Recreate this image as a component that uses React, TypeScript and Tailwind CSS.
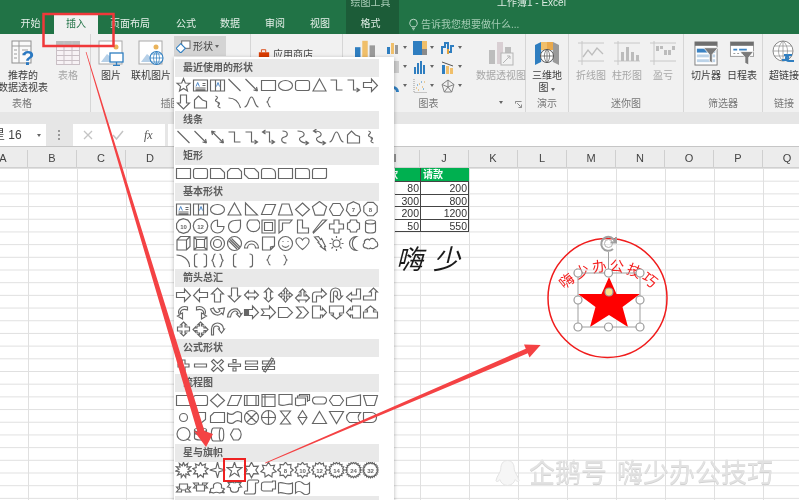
import React from "react";

const gon = (n: number, r: number, cy = 8, rot = -Math.PI / 2) => {
  let d = "";
  for (let i = 0; i < n; i++) {
    const a = rot + (i * 2 * Math.PI) / n;
    d += (i ? "L" : "M") + (8 + r * Math.cos(a)).toFixed(1) + " " + (cy + r * Math.sin(a)).toFixed(1);
  }
  return d + "Z";
};
const star = (n: number, ro: number, ri: number) => {
  let d = "";
  for (let i = 0; i < n * 2; i++) {
    const a = -Math.PI / 2 + (i * Math.PI) / n;
    const r = i % 2 ? ri : ro;
    d += (i ? "L" : "M") + (8 + r * Math.cos(a)).toFixed(1) + " " + (8 + r * Math.sin(a)).toFixed(1);
  }
  return d + "Z";
};
const circ = (r: number, cx = 8, cy = 8) => `M${cx - r} ${cy}a${r} ${r} 0 1 0 ${2 * r} 0a${r} ${r} 0 1 0-${2 * r} 0`;

const s = {
  star: "M8 1.5L9.8 6l4.7.3-3.6 3.1L12 14l-4-2.5L4 14l1.1-4.6L1.5 6.3 6.2 6Z",
  tb: "M1 3h14v11H1zM3 11h10M3 12.8h10M10 6.5h3M10 8.5h3|M3.5 9.5l1.7-4 1.7 4",
  vtb: "M1 3h14v11H1zM6 3v11M11 3v11|M7 9.5l1.5-4 1.5 4",
  line: "M2 2l12 12",
  arrow: "M2 2l12 12M14 14l-4-1M14 14l-1-4",
  dbl: "M2 2l12 12M14 14l-4-1M14 14l-1-4M2 2l4 1M2 2l1 4",
  rect: "M1 3.5h14v10H1z",
  ell: "M1 8.5a7 5 0 1 0 14 0a7 5 0 1 0-14 0",
  rr: "M3 3.5h10a2 2 0 0 1 2 2v6a2 2 0 0 1-2 2H3a2 2 0 0 1-2-2v-6a2 2 0 0 1 2-2z",
  tri: "M8 2l6.5 12h-13Z",
  elbow: "M2 3h6v10h6",
  elbowA: "M2 3h6v10h6M11 11l3 2-3 2",
  elbowD: "M3 3h6v10h5M11 11l3 2-3 2M5 1L2 3l3 2",
  curvy: "M5 2c6 0 6 5 2 6s-4 6 2 6",
  curvyA: "M3 2c8 0 8 5 4 6s-2 6 6 6M11 12l3 2-3 2",
  curvyD: "M3 2c8 0 8 5 4 6s-2 6 6 6M11 12l3 2-3 2M5 0L2 2l3 2",
  rarr: "M1 5.5h8V2l6 6.5-6 6v-4H1z",
  larr: "M15 5.5H7V2L1 8.5l6 6v-4h8z",
  uarr: "M5 15V7H2l6-6 6 6h-3v8z",
  darr: "M5 1h6v8h3l-6 6-6-6h3z",
  lrarr: "M1 8l4-4v2h6V4l4 4-4 4v-2H5v2z",
  udarr: "M8 1l4 4h-2v6h2l-4 4-4-4h2V5H4z",
  quad: "M8 1l2.5 3H9v3h3V5.5L15 8l-3 2.5V9H9v3h1.5L8 15l-2.5-3H7V9H4v1.5L1 8l3-2.5V7h3V4H5.5z",
  lru: "M8 2l3 3H9.5v4h2V7.5L15 11l-3.5 3.5V13h-7v1.5L1 11l3.5-3.5V9h2V5H5z",
  bent: "M1 15V8a3 3 0 0 1 3-3h6V2l5 5-5 4V9H5v6z",
  uturn: "M2 15V6a5 5 0 0 1 10 0v3h2l-3.5 4L7 9h2V6a2 2 0 0 0-4 0v9z",
  lup: "M15 2v10H6v2.5L1 10l5-4.5V8h5V2z",
  bup: "M1 13V9h8V5H7l4-4 4 4h-2v8z",
  cl: "M12 3C6 1 1 6 4 11l-2 1 5 3V9l-2 1C4 7 7 4 12 6z",
  cr: "M4 3c6-2 11 3 8 8l2 1-5 3V9l2 1c1-3-2-6-7-4z",
  cu: "M1 5c2 6 8 8 11 4l1.5 1.5L15 4l-6 1 1.5 2C8 10 5 8 4 4z",
  cd: "M1 13c1-9 11-11 13-3l1.5-.5L13 13l-3-3 1.5-.5C10 5 5 7 4 13z",
  sr: "M1 5.5h1v6H1zM3 5.5h1v6H3zM5 5.5h4V2l6 6.5-6 6v-3H5z",
  notch: "M1 5h8V2l6 6.5-6 6v-3H1l2.5-3z",
  pentR: "M1 3.5h9l5 5-5 5H1z",
  chev: "M2 3h7l5 5.5-5 5.5H2l5-5.5z",
  cRight: "M1 2h8v4h2V4l4 4.5-4 4.5v-2H9v3H1z",
  cDown: "M1 2h14v7h-4v2h2l-5 4-5-4h2V9H1z",
  cLeft: "M15 2H7v4H5V4L1 8.5 5 13v-2h2v3h8z",
  cUp: "M1 14h14V8h-4V6h2L8 2 3 6h2v2H1z",
  cUD: "M8 1l3 3H9.5v2H14v4H9.5v2H11l-3 3-3-3h1.5v-2H2V6h4.5V4H5z",
  cQuad: "M8 1l2.5 2.5H9V5h2.5v2H13V6l2.5 2.500L13 11V9.500h-1.500V12H9v1.500h1.500L8 16l-2.500-2.500H7V12H4.500V9.500H3V11L.5 8.500 3 6v1h1.500V5H7V3.500H5.500z",
  circA: "M2 14V8a6 6 0 0 1 12 0l1 0-3 4-3-4h1a3 3 0 0 0-6 0v6z",
  free: "M2 14V6l4-4 4 4 4 1.500V14z",
  scrib: "M6 2c6 2-4 4 2 6s-4 4 3 6M8 9c3 0 1 3 0 3",
  curve: "M2 4c6 0 10 3 12 10",
  wave: "M1 13c4 0 4-10 7-10s3 10 7 10",
  lbrace: "M10 3c-3 0-1 5-4 5 3 0 1 5 4 5",
  rbrace: "M6 3c3 0 1 5 4 5-3 0-1 5-4 5",
  r3: "M1 3.500h10l4 4v6H1z",
  r4: "M4 3.500h8l3 3v7H1v-7z",
  r5: "M1 3.500h10l4 4v6H5l-4-4z",
  r6: "M3 3.500h7a5 5 0 0 1 5 5v5H1v-8a2 2 0 0 1 2-2z",
  r8: "M1 3.500h11a3 3 0 0 1 3 3v7H1z",
  r9: "M3 3.500h12v8a2 2 0 0 1-2 2H1v-8a2 2 0 0 1 2-2z",
  rtri: "M2 2l12 12H2z",
  para: "M5 3.500h10l-4 10H1z",
  trap: "M4.500 3h7L15 14H1z",
  dia: "M8 2l7 6.500-7 6.500-7-6.500z",
  pent: gon(5, 7.5),
  hex: "M4.500 2.500h7L15 8.500l-3.500 6h-7L1 8.500z",
  hept: gon(7, 7.3) + "||7",
  oct: gon(8, 7.3, 8, -Math.PI / 8) + "||8",
  dec: gon(10, 7.3) + "||10",
  dod: gon(12, 7.3) + "||12",
  pie: "M8 2a6.500 6.500 0 1 0 6.500 6.500H8z",
  tear: "M14 2v6.500a6 6 0 1 1-6-6z",
  chord: "M14 2a6.500 6.500 0 1 1-8 0z",
  frame: "M1.500 2h13v13h-13zM4 4.500h8v8H4z",
  half: "M1.500 2h13l-2.500 3H5v7l-3.500 3z",
  ell2: "M3 2h5v8h6v5H3z",
  diag: "M1.500 14L11 2h4L2 15z",
  plus: "M5.500 2h5v4h4.500v5H10.500v4h-5v-4H1V6h4.500z",
  plaque: "M5 2h6a3 3 0 0 0 3 3v6a3 3 0 0 0-3 3H5a3 3 0 0 0-3-3V5a3 3 0 0 0 3-3z",
  can: "M3 4a5 2 0 0 1 10 0v9a5 2 0 0 1-10 0zM3 4a5 2 0 0 0 10 0",
  cube: "M1.500 5L5 1.500h9.500v10L11 15H1.500zM1.500 5H11v10M11 5l3.500-3.500",
  bevel: "M1.500 2h13v13h-13zM4 4.500h8v8H4zM1.500 2L4 4.500M14.500 2L12 4.500M1.500 15L4 12.500M14.500 15L12 12.500",
  donut: circ(7, 8, 8.5) + circ(4, 8, 8.5),
  nosym: circ(7, 8, 8.5) + "M3.500 4.500l9 9M5 3.500l8.500 8.500M2.500 6l8 8",
  arc: "M1 13a7 7 0 0 1 14 0h-3a4 4 0 0 0-8 0z",
  fold: "M2 2h12v9l-4 4H2zM14 11l-4 1v3",
  smile: circ(7, 8, 8.5) + "M5 6.500h1M10 6.500h1M4.500 10.500c2 2.500 5 2.500 7 0",
  heart: "M8 14.500C2 10 1 7 1.500 5 2.500 2 6.500 2 8 5c1.500-3 5.500-3 6.500 0 .5 2-.5 5-6.500 9.500z",
  bolt: "M3 2l4-.5 2 3 1-1 4 8-1 0 1 3.500-5-3.500 1-.5-3.500-3.500 1-.5z",
  sun: circ(3.5, 8, 8.5) + "M8 1v2M8 14v2M1 8.500h2M13 8.500h2M3 3.500l1.500 1.500M11.500 12l1.500 1.500M3 13.500L4.500 12M11.500 5L13 3.500",
  moon: "M11 1.500a7 7 0 1 0 0 14 8 8 0 0 1 0-14z",
  cloud: "M4 13c-4 0-4-4-2-5-1-3 3-5 5-3 2-3 6-1 6 1 3 1 3 6 0 6-1 2-4 2-5 1-1 1-3 1-4 0z",
  arcL: "M1 3c6 0 13 4 13 12",
  brk: "M5 2C3 2 2 3 2 4v9c0 1 1 2 3 2M11 2c2 0 3 1 3 2v9c0 1-1 2-3 2",
  brc: "M6 2c-3 0-1 6-4 6.500C5 9 3 15 6 15M10 2c3 0 1 6 4 6.500-3 .5-1 6.500-4 6.500",
  lb: "M10 2c-3 0-3 1-3 2v9c0 1 0 2 3 2",
  rb: "M6 2c3 0 3 1 3 2v9c0 1 0 2-3 2",
  add: "M6.500 3h3v4h4v3h-4v4h-3v-4h-4V7h4z",
  sub: "M2 7h12v3H2z",
  mul: "M4 2.500l4 4 4-4 2 2-4 4 4 4-2 2-4-4-4 4-2-2 4-4-4-4z",
  div: "M2 7h12v2.500H2zM6.500 2.500h3v3h-3zM6.500 11h3v3h-3z",
  eq: "M2 4h12v3H2zM2 9.500h12v3H2z",
  neq: "M2 4h12v3H2zM2 9.500h12v3H2zM11 1l2 1-8 13-2-1z",
  fPre: "M1 3.500h14v10H1zM3.500 3.500v10M12.500 3.500v10",
  fInt: "M1.500 2.500h13v12h-13zM1.500 5h13M4.500 2.500v12",
  fDoc: "M1.500 2.500h13v10c-4-2-8 3-13 0z",
  fMul: "M1 6h10v7c-3-1-6 2-10 0zM3 6V4h10v6M5 4V2.500h10v6h-2",
  fTerm: "M4.500 5h7a3.500 3.500 0 0 1 0 7h-7a3.500 3.500 0 0 1 0-7z",
  fPrep: "M4.500 3.500h7L15 8.500l-3.500 5h-7L1 8.500z",
  fMan: "M1 6L15 3v10.500H1z",
  fOp: "M1 3.500h14l-3 10H4z",
  fCon: circ(4, 8, 8.5),
  fOff: "M3 3.500h10v7l-5 4-5-4z",
  fCard: "M4.500 3.500H15v10H1V7z",
  fTape: "M1 4c3 2 5 2 7 0s4-2 7 0v9c-3-2-5-2-7 0s-4 2-7 0z",
  fSum: circ(7, 8, 8.5) + "M3 3.500l10 10M13 3.500l-10 10",
  fOr: circ(7, 8, 8.5) + "M8 1.500v14M1 8.500h14",
  fCol: "M3 2h10L3 15h10z",
  fSort: "M8 1.500l4.500 7-4.500 7-4.500-7zM3.500 8.500h9",
  fExt: "M8 2.500l7 12H1z",
  fMer: "M1 2.500h14l-7 12z",
  fSto: "M4 3.500h11c-3 3-3 7 0 10H4c-4-3-4-7 0-10z",
  fDel: "M1 3.500h8a5 5 0 0 1 0 10H1z",
  fMag: circ(6.5, 8, 8) + "M11 13l4 1.500",
  fDsk: "M2 4a6 2 0 0 1 12 0v8a6 2 0 0 1-12 0zM2 4a6 2 0 0 0 12 0M2 6.500a6 2 0 0 0 12 0",
  fDrum: "M4 2h8c3 0 3 13 0 13H4c-3 0-3-13 0-13zM12 2c-3 0-3 13 0 13",
  fDis: "M4 8.500L7 3h5a7 7 0 0 1 0 11H7z",
  b1: star(11, 7.8, 4.5),
  b2: star(9, 7.8, 4.8),
  s4: star(4, 7.8, 2.2),
  s5: star(5, 7.8, 3.1),
  s6: star(6, 7.8, 4.3),
  s7: star(7, 7.8, 4.8),
  s8: star(8, 7.8, 5.5) + "||8",
  s10: star(10, 7.8, 5.8) + "||10",
  s12: star(12, 7.8, 6) + "||12",
  s16: star(16, 7.8, 6.2) + "||14",
  s24: star(20, 7.8, 6.4) + "||24",
  s32: star(24, 7.8, 6.5) + "||32",
  rib1: "M1 8h3V5h8v3h3l-2 2.500 2 2.500H10v-2H6v2H1l2-2.500zM4 5v5h2M12 5v5h-2",
  rib2: "M1 4h5v2h4V4h5l-2 2.500L15 9h-3v3H4V9H1l2-2.500zM4 9V6h2M12 9V6h-2",
  rib3: "M1 10c1-1 2-1 3-1V6c1-3 7-3 8 0v3c1 0 2 0 3 1l-2 2 2 2c-2-1-3-1-5 0-2-1-4-1-6 0-2-1-3-1-5 0l2-2z",
  rib4: "M1 3c2 1 3 1 5 0 1 1 3 1 4 0 2 1 3 1 5 0l-2 2.500L15 8c-1 0-2 0-3 1v2c-1 3-7 3-8 0V9C3 8 2 8 1 8l2-2.500z",
  scr: "M4 3c0-2 2-2 2-2h8c2 0 1 3 0 3h-2v9c0 2-2 2-2 2H2c-2 0-1-3 0-3h2z",
  scrH: "M1 5c0-1 1-2 3-2h8V2h3v8h-3v2H3c-3 0-2-3-2-3z",
  wv: "M1 4c4-2 9 3 14 0v10c-5 3-10-2-14 0z",
  dwv: "M1 4c2-2 5-2 7 0s5 2 7 0v10c-2 2-5 2-7 0s-5-2-7 0z",
};

const rows: { title: string; rows: string[][]; pb?: string }[] = [
  { title: "最近使用的形状", rows: [[s.star, s.tb, s.vtb, s.line, s.arrow, s.rect, s.ell, s.rr, s.tri, s.elbow, s.elbowA, s.rarr], [s.darr, s.free, s.scrib, s.curve, s.wave, s.lbrace]] },
  { title: "线条", pb: "pb-px", rows: [[s.line, s.arrow, s.dbl, s.elbow, s.elbowA, s.elbowD, s.curvy, s.curvyA, s.curvyD, s.wave, s.free, s.scrib]] },
  { title: "矩形", pb: "pb-px", rows: [[s.rect, s.rr, s.r3, s.r4, s.r5, s.r6, s.rect, s.r8, s.r9]] },
  { title: "基本形状", rows: [
    [s.tb, s.vtb, s.ell, s.tri, s.rtri, s.para, s.trap, s.dia, s.pent, s.hex, s.hept, s.oct],
    [s.dec, s.dod, s.pie, s.tear, s.chord, s.frame, s.half, s.ell2, s.diag, s.plus, s.plaque, s.can],
    [s.cube, s.bevel, s.donut, s.nosym, s.arc, s.fold, s.smile, s.heart, s.bolt, s.sun, s.moon, s.cloud],
    [s.arcL, s.brk, s.brc, s.lb, s.rb, s.lbrace, s.rbrace],
  ] },
  { title: "箭头总汇", pb: "pb-px", rows: [
    [s.rarr, s.larr, s.uarr, s.darr, s.lrarr, s.udarr, s.quad, s.lru, s.bent, s.uturn, s.lup, s.bup],
    [s.cl, s.cr, s.cu, s.cd, s.sr, s.notch, s.pentR, s.chev, s.cRight, s.cDown, s.cLeft, s.cUp],
    [s.cUD, s.cQuad, s.circA],
  ] },
  { title: "公式形状", rows: [[s.add, s.sub, s.mul, s.div, s.eq, s.neq]] },
  { title: "流程图", pb: "pb-px", rows: [
    [s.rect, s.rr, s.dia, s.para, s.fPre, s.fInt, s.fDoc, s.fMul, s.fTerm, s.fPrep, s.fMan, s.fOp],
    [s.fCon, s.fOff, s.fCard, s.fTape, s.fSum, s.fOr, s.fCol, s.fSort, s.fExt, s.fMer, s.fSto, s.fDel],
    [s.fMag, s.fDsk, s.fDrum, s.fDis],
  ] },
  { title: "星与旗帜", rows: [
    [s.b1, s.b2, s.s4, s.s5, s.s6, s.s7, s.s8, s.s10, s.s12, s.s16, s.s24, s.s32],
    [s.rib1, s.rib2, s.rib3, s.rib4, s.scr, s.scrH, s.wv, s.dwv],
  ] },
];

function Shape({ spec }: { spec: string }) {
  const [d, blue, label] = spec.split("|");
  return (
    <svg viewBox="0 0 16 17" className="w-[17px] h-[17px] shrink-0" fill="none" stroke="#666666" strokeWidth="1.15">
      <path d={d} />
      {blue ? <path d={blue} stroke="#3f7fc4" strokeWidth="0.9" /> : null}
      {label ? (
        <text x="8" y="10.5" textAnchor="middle" fontSize="6" fill="#666" stroke="none" fontWeight="700">
          {label}
        </text>
      ) : null}
    </svg>
  );
}

function Menu() {
  return (
    <div className="absolute left-[174px] top-[57px] w-[220px] h-[445px] bg-white pl-px pt-[2px] shadow-[0_1px_4px_rgba(0,0,0,0.3)] overflow-hidden">
      {rows.map((sec) => (
        <div key={sec.title} className={sec.pb}>
          <div className="w-[204px] h-[18px] bg-[#e9e9e9] pl-2 text-[10px] leading-[18px] font-semibold text-[#5c5c5c]">{sec.title}</div>
          {sec.rows.map((r, i) => (
            <div key={i} className="flex h-[17px]">
              {r.map((spec, j) => (
                <Shape key={j} spec={spec} />
              ))}
            </div>
          ))}
        </div>
      ))}
      <div className="w-[204px] h-[18px] bg-[#e9e9e9]" />
    </div>
  );
}

function Tab({ w, children, active }: { w: string; children: React.ReactNode; active?: boolean }) {
  return (
    <div className={`${w} h-[20px] text-center text-[10px] leading-[19px] ${active ? "bg-[#f1f1f1] text-[#217346]" : "text-[#e6f0ea]"}`}>{children}</div>
  );
}

function Header() {
  return (
    <div className="flex h-[34px] bg-[#217346] overflow-hidden">
      <div className="flex items-end pl-[7px]">
        <Tab w="w-[47px]">开始</Tab>
        <Tab w="w-[44px]" active>插入</Tab>
        <Tab w="w-[64px]">页面布局</Tab>
        <Tab w="w-[48px]">公式</Tab>
        <Tab w="w-[40px]">数据</Tab>
        <Tab w="w-[50px]">审阅</Tab>
        <Tab w="w-[40px]">视图</Tab>
      </div>
      <div className="ml-[6px] w-[53px] bg-[#1c5c38] flex flex-col items-center text-[10px] text-[#dcebe2] pr-[4px]">
        <div className="h-[14px] -mt-[4px] leading-[14px] text-[#a9cdb8]">绘图工具</div>
        <div className="h-[20px] mt-[4px] leading-[19px]">格式</div>
      </div>
      <div className="flex-1 flex flex-col">
        <div className="h-[14px] pl-[98px] -mt-[4px] leading-[14px] text-[10px] text-[#dcebe2] whitespace-pre">工作簿1 - Excel</div>
        <div className="h-[20px] mt-[4px] flex items-center pl-[10px] gap-[3px] text-[10px] text-[#a3ccb4]">
          <svg viewBox="0 0 12 16" className="w-[9px] h-[13px]" fill="none" stroke="#cfe3d7" strokeWidth="1.2">
            <path d="M3.5 11C1.5 9 1 7.5 1 6a5 5 0 0 1 10 0c0 1.5-.5 3-2.500 5zM4 13h4M5 15h2" />
          </svg>
          <span>告诉我您想要做什么...</span>
        </div>
      </div>
    </div>
  );
}

function Sep({ w, label, pr, children, launcher }: { w: string; label: string; pr?: string; children: React.ReactNode; launcher?: boolean }) {
  return (
    <div className={`${w} shrink-0 h-[78px] flex flex-col`}>
      <div className="h-[64px] pt-[3px] border-r border-[#d6d6d6] flex">{children}</div>
      <div className={`relative h-[14px] border-r border-[#d6d6d6] text-center text-[10px] leading-[12px] text-[#777] ${pr ?? ""}`}>
        {label}
        {launcher ? (
          <svg viewBox="0 0 8 8" className="absolute right-[3px] top-[3px] w-[7px] h-[7px]" fill="none" stroke="#777" strokeWidth="1">
            <path d="M.5 3V.5H7.500M7.500 4v3.500H4M2.500 2.500l4 4" />
          </svg>
        ) : null}
      </div>
    </div>
  );
}

function Big({ w, icon, label, grey, extra }: { w: string; icon: React.ReactNode; label: React.ReactNode; grey?: boolean; extra?: React.ReactNode }) {
  return (
    <div className={`${w} shrink-0 flex flex-col items-center`}>
      <div className="h-[28px] mt-[2px] flex items-center justify-center">{icon}</div>
      <div className={`mt-[3px] text-center text-[10px] leading-[12px] whitespace-nowrap ${grey ? "text-[#a6a6a6]" : "text-[#3c3c3c]"}`}>{label}</div>
      {extra}
    </div>
  );
}

const PivotIcon = (
  <svg viewBox="0 0 24 28" className="w-[24px] h-[28px]">
    <rect x="1" y="2" width="19" height="22" fill="#fafafa" stroke="#8f8f8f" />
    <path d="M1 7h19M8 2v22M3 11h3M3 15h3M3 19h3M11 11h6M11 15h3" stroke="#9a9a9a" fill="none" />
    <text x="17" y="26" fontSize="21" fontWeight="700" fill="#2b79c2" textAnchor="middle">?</text>
  </svg>
);
const TableIcon = (
  <svg viewBox="0 0 24 24" className="w-[24px] h-[24px] mb-[1px]" fill="none" stroke="#c9bfc5">
    <rect x="0.5" y="0.5" width="23" height="23" fill="#f7f2f5" />
    <rect x="0.5" y="0.5" width="23" height="4" fill="#bdbdbd" stroke="#bdbdbd" />
    <path d="M8 0v24M16 0v24M0 9.500h24M0 14.500h24M0 19.500h24" />
  </svg>
);
const PicIcon = (
  <svg viewBox="0 0 26 26" className="w-[26px] h-[26px]">
    <rect x="1" y="1" width="23" height="23" fill="#fff" stroke="#a9a9a9" />
    <path d="M3 22l6-8 5 4 4-3 4 7z" fill="#b6d0e8" />
    <circle cx="18" cy="7" r="2.5" fill="#eab35a" />
    <rect x="12" y="13" width="13" height="9" fill="#fff" stroke="#2f7ec0" strokeWidth="1.3" />
    <path d="M18.500 22v3M15 25.500h7" stroke="#2f7ec0" strokeWidth="1.3" />
  </svg>
);
const NetIcon = (
  <svg viewBox="0 0 26 26" className="w-[26px] h-[26px]">
    <rect x="1" y="1" width="23" height="23" fill="#fff" stroke="#a9a9a9" />
    <path d="M3 22l6-8 5 4 4-3 4 7z" fill="#b6d0e8" />
    <circle cx="18" cy="7" r="2.5" fill="#eab35a" />
    <circle cx="18.5" cy="18" r="6.5" fill="#fff" stroke="#2f7ec0" strokeWidth="1.1" />
    <path d="M12 18h13M18.500 11.500v13M14 14h9M14 22h9M18.500 11.500c-4 3-4 10 0 13M18.500 11.500c4 3 4 10 0 13" stroke="#2f7ec0" strokeWidth="0.7" fill="none" />
  </svg>
);
const PivotChart = (
  <svg viewBox="0 0 26 26" className="w-[26px] h-[26px]">
    <rect x="1" y="10" width="6" height="14" fill="#bdbdbd" />
    <rect x="9" y="2" width="6" height="22" fill="#d9cfd3" />
    <rect x="17" y="7" width="6" height="8" fill="#bdbdbd" />
    <rect x="13" y="13" width="12" height="12" fill="#f2f2f2" stroke="#b5b5b5" />
    <path d="M15 23l7-7M19 16h3v3" stroke="#b5b5b5" fill="none" />
  </svg>
);
const MapIcon = (
  <svg viewBox="0 0 26 26" className="w-[26px] h-[26px]">
    <path d="M1 5l6-3v20l-6 3z" fill="#2f7ec0" />
    <path d="M7 2h6v8H7z" fill="#f0bf6a" />
    <path d="M13 2h6v8h-6z" fill="#e9a94c" />
    <path d="M19 2l6 3v20l-6-3z" fill="#9a9a9a" />
    <path d="M7 10h12v12H7z" fill="#d8dde4" />
    <circle cx="13" cy="16" r="6.5" fill="#fff" stroke="#555" />
    <path d="M6.500 16h13M13 9.500v13M13 9.500c-3.500 3-3.500 10 0 13M13 9.500c3.500 3 3.500 10 0 13" stroke="#555" strokeWidth="0.7" fill="none" />
  </svg>
);
const Spark = ({ d, bars }: { d?: string; bars?: number[][] }) => (
  <svg viewBox="0 0 26 24" className="w-[26px] h-[24px]" fill="none" stroke="#c8c8c8">
    <path d="M0 2h26M4 0v24M0 20h26" />
    {d ? <path d={d} stroke="#bdbdbd" strokeWidth="1.3" /> : null}
    {bars ? bars.map((b, i) => <rect key={i} x={b[0]} y={b[1]} width="3" height={b[2]} fill="#bcbcbc" stroke="none" />) : null}
  </svg>
);
const SlicerIcon = (
  <svg viewBox="0 0 26 26" className="w-[25px] h-[25px]">
    <rect x="1" y="1" width="23" height="24" fill="#fff" stroke="#7f7f7f" />
    <rect x="1" y="1" width="23" height="4" fill="#6f6f6f" />
    <rect x="3" y="8" width="19" height="4" fill="#3b83c4" />
    <rect x="3" y="14" width="19" height="3" fill="#bcd3e8" />
    <rect x="3" y="19" width="19" height="3" fill="#bcd3e8" />
    <path d="M10 7h15l-6 7v9l-3-2v-7z" fill="#7a7a7a" stroke="#fff" strokeWidth="0.8" />
  </svg>
);
const TimelineIcon = (
  <svg viewBox="0 0 26 26" className="w-[26px] h-[25px]">
    <rect x="1" y="1" width="24" height="15" fill="#fff" stroke="#9a9a9a" />
    <rect x="1" y="1" width="24" height="4" fill="#6f6f6f" />
    <path d="M4 9h4M10 9h8" stroke="#3b83c4" strokeWidth="2" />
    <path d="M4 13h2M8 13h2M12 13h2" stroke="#9a9a9a" />
    <path d="M11 11h14l-5 6v8l-4-2v-6z" fill="#7a7a7a" stroke="#fff" strokeWidth="0.8" />
  </svg>
);
const LinkIcon = (
  <svg viewBox="0 0 26 26" className="w-[26px] h-[26px]">
    <circle cx="12" cy="11" r="10" fill="#fff" stroke="#8a8a8a" />
    <path d="M2 11h20M12 1v20M3 6h18M3 16h18M12 1c-6 5-6 15 0 20M12 1c6 5 6 15 0 20" stroke="#8a8a8a" strokeWidth="0.7" fill="none" />
    <path d="M11 20h5a3 3 0 0 0 0-5h-3M21 15h-3a3 3 0 0 0 0 6h5" stroke="#2f7ec0" strokeWidth="2" fill="none" />
  </svg>
);
const Caret = () => <span className="w-0 h-0 border-x-[2.5px] border-x-transparent border-t-[3px] border-t-[#666] inline-block" />;

function Mini({ children }: { children: React.ReactNode }) {
  return (
    <div className="w-[28px] h-[19px] flex items-center gap-[3px] shrink-0">
      <svg viewBox="0 0 14 14" className="w-[14px] h-[14px]">{children}</svg>
      <Caret />
    </div>
  );
}

function Ribbon() {
  return (
    <div className="flex h-[78px] bg-[#f1f1f1] overflow-hidden">
      <Sep w="w-[91px]" label="表格" pr="pr-[46px]">
        <Big w="w-[46px]" icon={PivotIcon} label={<>推荐的<br />数据透视表</>} />
        <Big w="w-[44px]" icon={TableIcon} label="表格" grey />
      </Sep>
      <Sep w="w-[160px]" label="插图">
        <div className="w-[40px] shrink-0"><Big w="w-[40px]" icon={PicIcon} label="图片" /></div>
        <Big w="w-[40px]" icon={NetIcon} label="联机图片" />
        <div className="ml-[3px] w-[52px] h-[20px] bg-[#d4d4d4] flex items-center gap-[2px] pl-[2px] text-[10px] text-[#444] -mt-[1px]">
          <svg viewBox="0 0 16 14" className="w-[15px] h-[13px]" fill="none" strokeWidth="1.2">
            <rect x="6" y="1" width="9" height="8" stroke="#777" fill="#fff" />
            <path d="M5 4l5 5-5 5-5-5z" stroke="#2f7ec0" fill="#fff" />
          </svg>
          形状
          <Caret />
        </div>
      </Sep>
      <Sep w="w-[92px]" label="加载项">
        <div className="ml-[7px] pt-[10px] h-[24px] flex items-center gap-[3px] text-[10px] text-[#444] whitespace-nowrap">
          <svg viewBox="0 0 14 14" className="w-[12px] h-[12px] shrink-0">
            <path d="M1 5h12v8H1z" fill="#d83b01" />
            <path d="M4 5V2h5v3" fill="none" stroke="#d83b01" />
          </svg>
          <span>应用商店</span>
        </div>
      </Sep>
      <Sep w="w-[183px]" label="图表" pr="pr-[11px]" launcher>
        <div className="ml-[11px] w-[24px] shrink-0 mt-[2px]">
          <svg viewBox="0 0 24 22" className="w-[22px] h-[20px]">
            <rect x="1" y="9" width="6" height="13" fill="#2f7ec0" />
            <rect x="9" y="2" width="6" height="20" fill="#f0bf6a" />
            <rect x="17" y="7" width="6" height="15" fill="#9a9a9a" />
          </svg>
        </div>
        <div className="ml-[8px] w-[27px] shrink-0 flex flex-col gap-0 mt-[1px]">
          <Mini>
            <rect x="1" y="6" width="3" height="7" fill="#2f7ec0" />
            <rect x="5" y="2" width="3" height="11" fill="#f0bf6a" />
            <rect x="9" y="4" width="3" height="9" fill="#9a9a9a" />
          </Mini>
          <Mini><rect x="1" y="1" width="12" height="12" fill="#ccc" /></Mini>
          <Mini><path d="M1 13a6 6 0 0 1 12 0h-3a3 3 0 0 0-6 0z" fill="#2f7ec0" /></Mini>
        </div>
        <div className="w-[28px] shrink-0 flex flex-col mt-[1px]">
          <Mini>
            <rect x="0" y="0" width="9" height="14" fill="#2f7ec0" />
            <rect x="9" y="0" width="5" height="8" fill="#f0bf6a" />
            <rect x="9" y="8" width="5" height="6" fill="#8a8a8a" />
          </Mini>
          <Mini>
            <rect x="1" y="7" width="2" height="7" fill="#2f7ec0" />
            <rect x="4" y="3" width="2" height="11" fill="#2f7ec0" />
            <rect x="7" y="1" width="2" height="13" fill="#2f7ec0" />
            <rect x="10" y="5" width="2" height="9" fill="#2f7ec0" />
          </Mini>
          <Mini>
            <path d="M1 0v13.500h13" fill="none" stroke="#999" strokeDasharray="1 1" />
            <path d="M3 9h1M6 5h1M9 8h1M11 3h1M5 11h1" stroke="#e0a33e" />
            <path d="M4 6h1M8 3h1M10 10h1" stroke="#2f7ec0" />
          </Mini>
        </div>
        <div className="w-[29px] shrink-0 flex flex-col mt-[1px]">
          <Mini>
            <path d="M1 13V6h3V2h3v9h3V5h3" fill="none" stroke="#2f7ec0" strokeWidth="2" />
            <path d="M7 13V8" stroke="#e0a33e" strokeWidth="2" />
          </Mini>
          <Mini>
            <rect x="1" y="5" width="3" height="9" fill="#2f7ec0" />
            <rect x="5" y="6" width="3" height="8" fill="#f0bf6a" />
            <rect x="9" y="8" width="3" height="6" fill="#f0bf6a" />
            <path d="M1 2l11 4" stroke="#555" />
          </Mini>
          <Mini>
            <path d="M7 1l6 4.500-2.300 7.500H3.300L1 5.500zM7 1v7M1 5.500L7 8l6-2.500M3.300 13L7 8l3.700 5" fill="none" stroke="#777" strokeWidth="0.9" />
          </Mini>
        </div>
        <div className="ml-[5px]"><Big w="w-[52px]" icon={PivotChart} label="数据透视图" grey extra={<div className="mt-[5px]"><Caret /></div>} /></div>
      </Sep>
      <Sep w="w-[43px]" label="演示">
        <Big w="w-[42px]" icon={MapIcon} label={<>三维地<br />图 <Caret /></>} />
      </Sep>
      <Sep w="w-[115px]" label="迷你图">
        <div className="w-[4px] shrink-0" />
        <Big w="w-[36px]" grey label="折线图" icon={<Spark d="M5 16l5-7 4 5 5-7 6 6" />} />
        <Big w="w-[36px]" grey label="柱形图" icon={<Spark bars={[[7, 11, 9], [12, 6, 14], [17, 11, 9], [22, 14, 6]]} />} />
        <Big w="w-[36px]" grey label="盈亏" icon={<Spark bars={[[6, 5, 5], [10, 5, 3], [14, 9, 5], [18, 9, 5], [22, 5, 4]]} />} />
      </Sep>
      <Sep w="w-[79px]" label="筛选器">
        <div className="w-[4px] shrink-0" />
        <Big w="w-[36px]" icon={SlicerIcon} label="切片器" />
        <Big w="w-[36px]" icon={TimelineIcon} label="日程表" />
      </Sep>
      <div className="w-[36px] shrink-0 h-[78px] flex flex-col">
        <div className="h-[64px] pt-[3px] flex pl-[3px]">
          <Big w="w-[36px]" icon={LinkIcon} label="超链接" />
        </div>
        <div className="text-center text-[10px] leading-[12px] text-[#777] pl-[6px]">链接</div>
      </div>
    </div>
  );
}

function FormulaBar() {
  return (
    <div className="flex h-[24px] bg-[#e6e6e6] border-b border-[#c6c6c6] pt-px">
      <div className="w-[46px] h-[22px] bg-white flex items-center justify-between pr-[5px] overflow-hidden text-[12px] text-[#444]">
        <span className="-ml-[7px] whitespace-pre">星 16</span>
        <Caret />
      </div>
      <div className="w-[27px] flex flex-col items-center justify-center gap-[2px] pr-[1px]">
        <span className="w-[2px] h-[2px] bg-[#999]" />
        <span className="w-[2px] h-[2px] bg-[#999]" />
        <span className="w-[2px] h-[2px] bg-[#999]" />
      </div>
      <div className="w-[92px] h-[22px] bg-white flex items-center">
        <svg viewBox="0 0 10 10" className="ml-[10px] w-[10px] h-[10px]" fill="none" stroke="#c4c4c4" strokeWidth="1.3"><path d="M1 1l8 8M9 1l-8 8" /></svg>
        <svg viewBox="0 0 12 10" className="ml-[19px] w-[12px] h-[10px]" fill="none" stroke="#c4c4c4" strokeWidth="1.5"><path d="M1 5l3.500 4L11 1" /></svg>
        <span className="ml-[20px] font-['Liberation_Serif',serif] italic text-[12px] text-[#555]">fx</span>
      </div>
      <div className="ml-[3px] flex-1 h-[22px] bg-white" />
    </div>
  );
}

function Columns() {
  const cols = ["A", "B", "C", "D", "", "", "", "", "I", "J", "K", "L", "M", "N", "O", "P", "Q"];
  return (
    <div className="flex h-[21px] bg-[#ececec] border-b border-[#d0d0d0] -ml-[21px] overflow-hidden">
      {cols.map((c, i) => (
        <div key={i} className="w-[49px] shrink-0 border-r border-[#cfcfcf] mt-[3px] text-center text-[11px] leading-[17px] text-[#444] font-medium">{c}</div>
      ))}
    </div>
  );
}

const tableRows = [["80", "200"], ["300", "800"], ["200", "1200"], ["50", "550"]];

function SheetTable() {
  return (
    <div className="absolute left-[395px] top-0 w-[74px] border-b border-[#444]">
      <div className="flex h-[13px] bg-[#00b050] text-white text-[10px] leading-[13px] font-bold">
        <div className="w-[25px] overflow-hidden text-left -indent-[7px]">款</div>
        <div className="flex-1 border-l border-[#444] pl-[2px]">请款</div>
      </div>
      {tableRows.map((r) => (
        <div key={r[1]} className="flex h-[12.5px] border-t border-[#444] bg-white text-[10.5px] leading-[12px] text-[#333]">
          <div className="w-[25px] text-right pr-px">{r[0]}</div>
          <div className="flex-1 border-l border-[#444] text-right pr-px border-r">{r[1]}</div>
        </div>
      ))}
    </div>
  );
}

function Stamp() {
  return (
    <svg className="absolute left-[540px] top-[62px] w-[140px] h-[140px]" viewBox="540 230 140 140">
      <circle cx="607.5" cy="298" r="59.5" fill="none" stroke="#f01c1c" strokeWidth="1.5" />
      <path id="stamp-arc" d="M548 332A61 61 0 0 1 670 332" fill="none" />
      <text fontSize="14.5" fill="#f42020" letterSpacing="2" textAnchor="middle">
        <textPath href="#stamp-arc" startOffset="50%">嗨少办公技巧</textPath>
      </text>
      <path d="M609 277l7.500 17H640l-17.500 13 5.500 20-19-12-19 12 5.500-20L578 294h23.500z" fill="#ff0000" />
      <rect x="578" y="273" width="62" height="54" fill="none" stroke="#a0a0a0" />
      <path d="M608.500 252v21" stroke="#a0a0a0" />
      <circle cx="608.5" cy="243.5" r="4" fill="none" stroke="#b0b0b0" strokeWidth="1" />
      <path d="M613 249a7 7 0 1 1 2-7M616 237v5.500h-5.500" fill="none" stroke="#a0a0a0" strokeWidth="2" />
      {[[578, 273], [608.5, 273], [640, 273], [578, 300], [640, 300], [578, 327], [608.5, 327], [640, 327]].map((p) => (
        <circle key={p.join()} cx={p[0]} cy={p[1]} r="4" fill="#fff" stroke="#9a9a9a" strokeWidth="1.2" />
      ))}
      <circle cx="609" cy="292" r="4" fill="#f7e48f" stroke="#9a9a9a" strokeWidth="1.2" />
    </svg>
  );
}

function Annotations() {
  return (
    <svg className="absolute inset-0 w-[799px] h-[500px] pointer-events-none" viewBox="0 0 799 500">
      <path d="M85.7 52h.7L204.5 431l8.500 3-7 13-12-16 3.500 1z" fill="#f44244" />
      <path d="M265 462.800l.3.6 262.500-110.100 1.700 4.100L540.600 345 524 344.600l1.800 4.100z" fill="#f44244" />
      <rect x="43.5" y="14" width="70" height="32" fill="none" stroke="#f0383a" strokeWidth="2.5" />
      <rect x="224" y="459" width="21" height="22" fill="none" stroke="#ee2222" strokeWidth="2" />
    </svg>
  );
}

function Watermark() {
  return (
    <div className="absolute left-[495px] top-[290px] flex items-center text-[26px] leading-[30px] text-[#e2e2e2] [text-shadow:0_1px_0_#d2d2d2]">
      <svg viewBox="0 0 26 28" className="w-[25px] h-[28px] mr-[9px]">
        <path d="M13 1c-5 0-7 4-7 9 0 3-4 7-5 12 1 2 3 0 4-1 1 3 4 6 8 6s7-3 8-6c1 1 3 3 4 1-1-5-5-9-5-12 0-5-2-9-7-9z" fill="#f6f6f6" stroke="#e2e2e2" />
      </svg>
      <span>企鹅号</span>
      <span className="ml-[10px]">嗨少办公技巧</span>
    </div>
  );
}

function Sheet() {
  return (
    <div className="relative h-[332px] bg-white bg-[image:linear-gradient(#e0e0e0_1px,transparent_1px),linear-gradient(90deg,#e0e0e0_1px,transparent_1px)] bg-size-[49px_12.7px] bg-position-[28px_0px]">
      <SheetTable />
      <div className="absolute left-[396px] top-[72px] text-[27px] leading-[36px] tracking-[10px] text-[#1a1a1a] italic whitespace-nowrap font-['Noto_Sans_CJK_SC',sans-serif]">嗨少</div>
      <Stamp />
      <Watermark />
    </div>
  );
}

export default function App() {
  return (
    <div className="relative w-[799px] h-[500px] overflow-hidden bg-white blur-[0.35px] font-['Liberation_Sans','Noto_Sans_CJK_SC',sans-serif]">
      <Header />
      <Ribbon />
      <div className="h-[11px] bg-[#e6e6e6]" />
      <FormulaBar />
      <Columns />
      <Sheet />
      <Menu />
      <Annotations />
    </div>
  );
}
